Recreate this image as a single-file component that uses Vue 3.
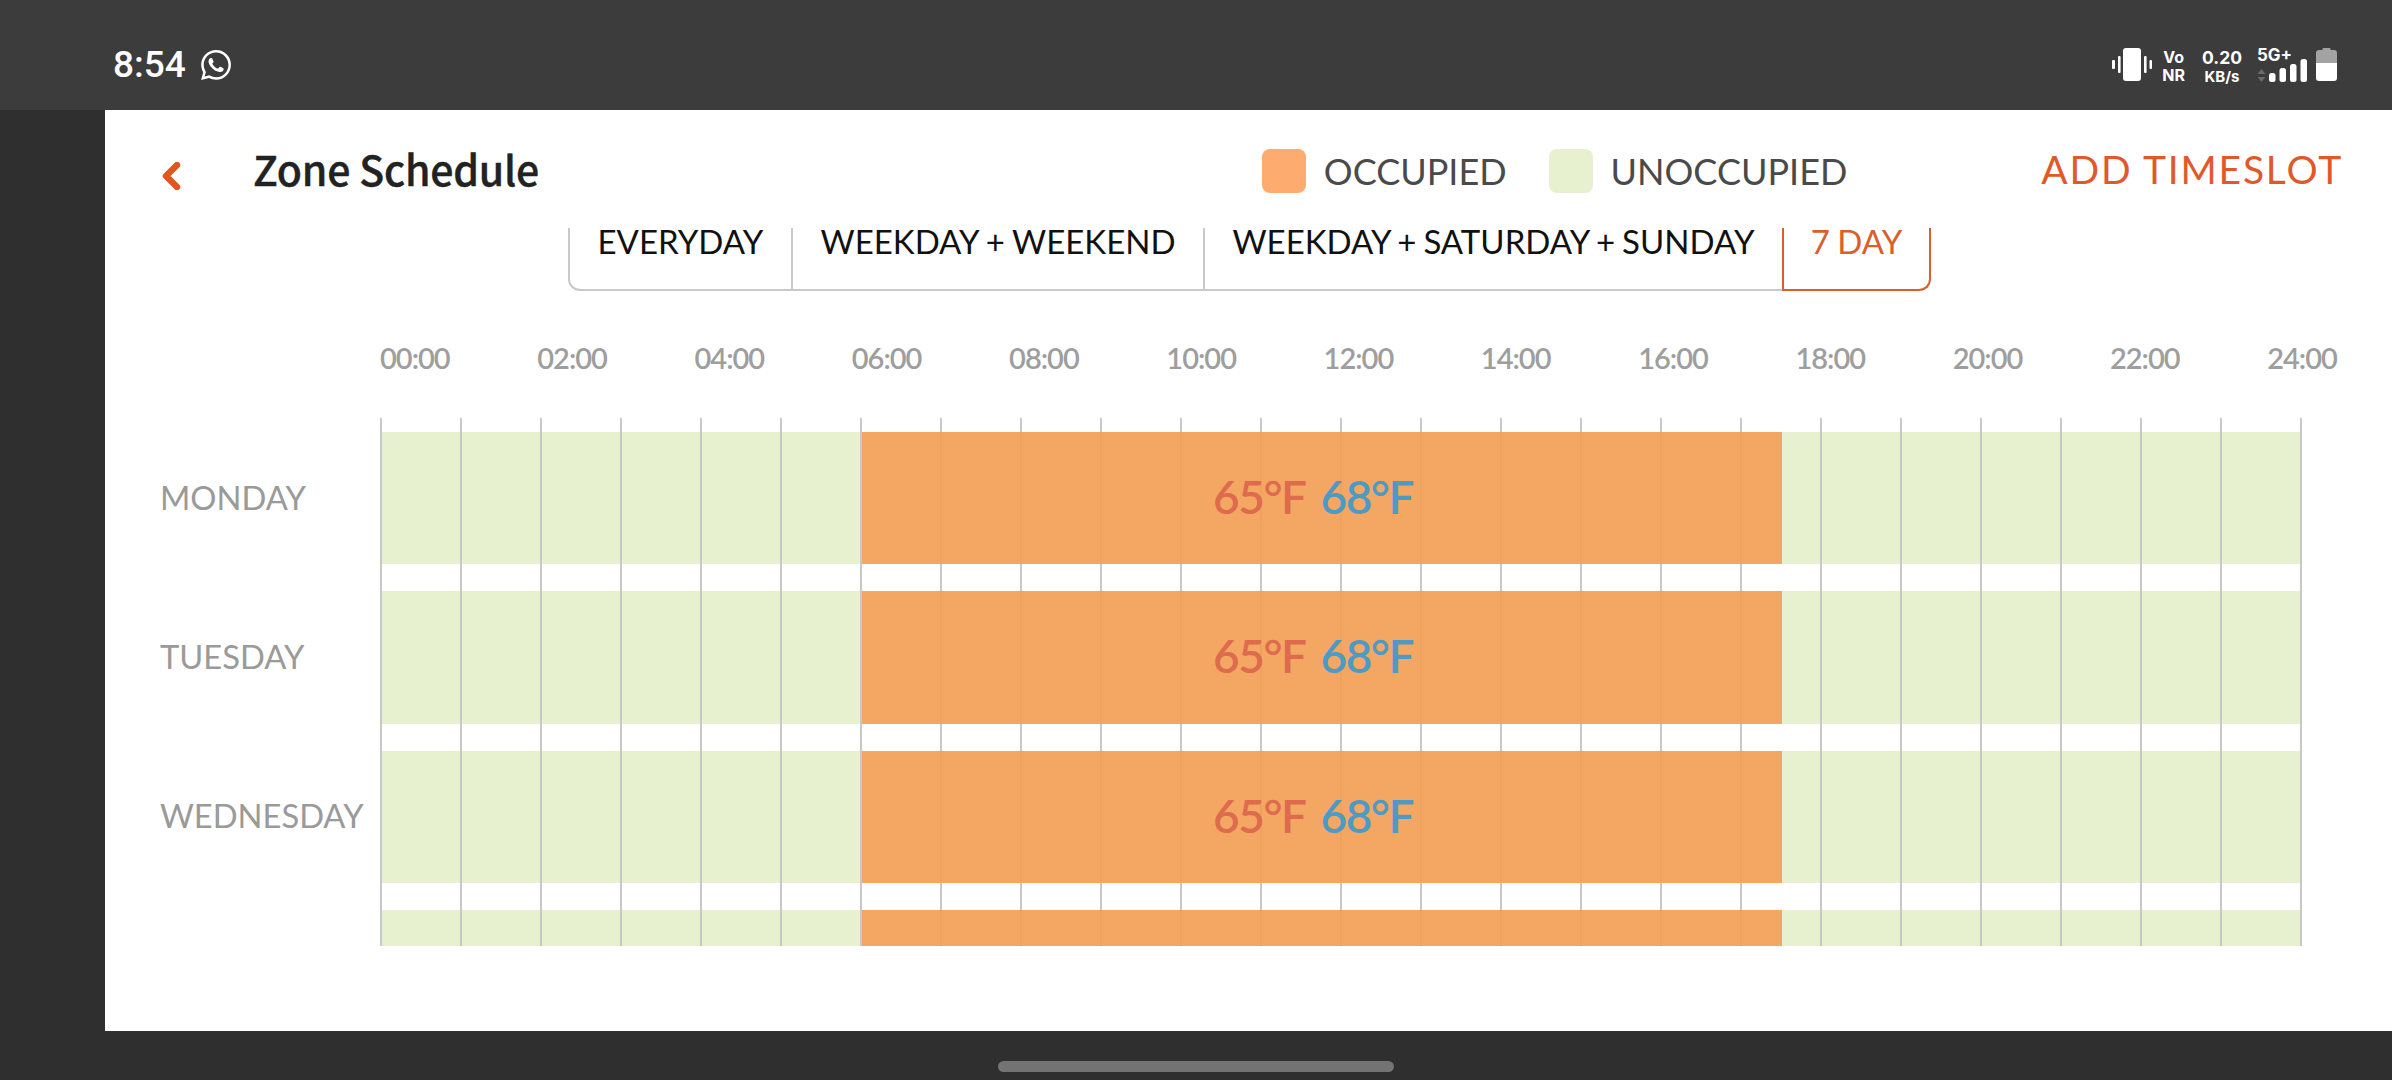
<template>
  <div class="page">
    <div class="status-bar">
      <div class="status-left">
        <span class="clock">8:54</span>
        <svg class="wa" viewBox="0 0 24 24" width="30" height="30"><path fill="#fff" d="M17.472 14.382c-.297-.149-1.758-.867-2.03-.967-.273-.099-.471-.148-.67.15-.197.297-.767.966-.94 1.164-.173.199-.347.223-.644.075-.297-.15-1.255-.463-2.39-1.475-.883-.788-1.48-1.761-1.653-2.059-.173-.297-.018-.458.13-.606.134-.133.298-.347.446-.52.149-.174.198-.298.298-.497.099-.198.05-.371-.025-.52-.075-.149-.669-1.612-.916-2.207-.242-.579-.487-.5-.669-.51-.173-.008-.371-.01-.57-.01-.198 0-.52.074-.792.372-.272.297-1.04 1.016-1.04 2.479 0 1.462 1.065 2.875 1.213 3.074.149.198 2.096 3.2 5.077 4.487.709.306 1.262.489 1.694.625.712.227 1.36.195 1.871.118.571-.085 1.758-.719 2.006-1.413.248-.694.248-1.289.173-1.413-.074-.124-.272-.198-.57-.347m-5.421 7.403h-.004a9.87 9.87 0 01-5.031-1.378l-.361-.214-3.741.982.998-3.648-.235-.374a9.86 9.86 0 01-1.51-5.26c.001-5.45 4.436-9.884 9.888-9.884 2.64 0 5.122 1.03 6.988 2.898a9.825 9.825 0 012.893 6.994c-.003 5.45-4.437 9.884-9.885 9.884m8.413-18.297A11.815 11.815 0 0012.05 0C5.495 0 .16 5.335.157 11.892c0 2.096.547 4.142 1.588 5.945L.057 24l6.305-1.654a11.882 11.882 0 005.683 1.448h.005c6.554 0 11.89-5.335 11.893-11.893a11.821 11.821 0 00-3.48-8.413Z"/></svg>
      </div>
      <div class="status-right">
        <svg class="vibrate" viewBox="0 0 40 34" width="40" height="34" fill="#fff">
          <rect x="11" y="0" width="18" height="33" rx="3"/>
          <rect x="0" y="12" width="3" height="9" rx="1"/>
          <rect x="6" y="8" width="2.6" height="17" rx="1"/>
          <rect x="32" y="8" width="2.6" height="17" rx="1"/>
          <rect x="37.5" y="12" width="2.5" height="9" rx="1"/>
        </svg>
        <div class="stack vo"><span>Vo</span><span>NR</span></div>
        <div class="stack speed"><span class="big">0.20</span><span>KB/s</span></div>
        <div class="net">
          <span class="five-g">5G+</span>
          <svg viewBox="0 0 52 13" width="52" height="13">
            <path fill="#6b6b6b" d="M4.500 0 8.500 5H.5zM4.500 13 .5 8h8z"/>
            <g fill="#fff">
              <rect x="12" y="4" width="6.500" height="9" rx="2.500"/>
              <rect x="22.500" y="-1" width="6.500" height="14" rx="2.500"/>
              <rect x="33" y="-5" width="6.500" height="18" rx="2.500"/>
              <rect x="43.500" y="-10" width="6.500" height="23" rx="2.500"/>
            </g>
          </svg>
        </div>
        <svg class="battery" viewBox="0 0 21 33" width="21" height="33">
          <path fill="#a3a3a3" d="M0 15V5q0-3 3-3h3.500V1q0-1 1-1h6q1 0 1 1v1H18q3 0 3 3v10z"/>
          <path fill="#fff" d="M0 15h21v15q0 3-3 3H3q-3 0-3-3z"/>
        </svg>
      </div>
    </div>

    <div class="middle">
      <div class="side"></div>
      <main class="panel">
        <header class="head">
          <svg class="back" viewBox="0 0 20 28" width="20" height="28"><path d="M16 3 5 14l11 11" fill="none" stroke="#e0561f" stroke-width="6.500" stroke-linejoin="round" stroke-linecap="round"/></svg>
          <h1>Zone Schedule</h1>
          <div class="legend">
            <span class="swatch occ"></span><span class="legend-text">OCCUPIED</span>
            <span class="swatch unocc"></span><span class="legend-text">UNOCCUPIED</span>
          </div>
          <a href="#" class="add" @click.prevent>ADD TIMESLOT</a>
        </header>

        <div class="tabs">
          <div
            v-for="t in tabs"
            :key="t.label"
            class="tab"
            :class="[t.cls, { active: t.active }]"
          >{{ t.label }}</div>
        </div>

        <div class="times">
          <span v-for="h in hours" :key="h">{{ h }}</span>
        </div>

        <div class="schedule">
          <div v-for="d in days" :key="d.name" class="row">
            <div class="day">{{ d.name }}</div>
            <div class="track">
              <div class="seg early"></div>
              <div class="seg busy">
                <template v-if="d.temps">
                  <span class="heat">65°F</span>
                  <span class="cool">68°F</span>
                </template>
              </div>
              <div class="seg late"></div>
            </div>
          </div>
          <div class="lines">
            <i v-for="n in 25" :key="n"></i>
          </div>
        </div>
      </main>
    </div>

    <div class="bottom-bar"><div class="home-pill"></div></div>
  </div>
</template>

<script setup>
const tabs = [
  { label: 'EVERYDAY', cls: 't1' },
  { label: 'WEEKDAY + WEEKEND', cls: 't2' },
  { label: 'WEEKDAY + SATURDAY + SUNDAY', cls: 't3' },
  { label: '7 DAY', cls: 't4', active: true }
]

const hours = []
for (let h = 0; h <= 24; h += 2) {
  hours.push(String(h).padStart(2, '0') + ':00')
}

// the last row is scrolled almost out of view, only its bar still shows
const days = [
  { name: 'MONDAY', temps: true },
  { name: 'TUESDAY', temps: true },
  { name: 'WEDNESDAY', temps: true },
  { name: '', temps: false }
]
</script>

<style>
html, body {
  margin: 0;
  background: #2f2f2f;
}
</style>

<style scoped>
.page {
  width: 2392px;
  height: 1080px;
  display: flex;
  flex-direction: column;
  overflow: hidden;
  font-family: Lato, "Liberation Sans", sans-serif;
}

/* status bar */
.status-bar {
  height: 110px;
  flex: none;
  background: #3c3c3c;
  display: flex;
  justify-content: space-between;
  align-items: flex-start;
  padding: 48px 55px 0 113px;
  box-sizing: border-box;
  color: #fff;
}
.status-left {
  display: flex;
  align-items: center;
  gap: 15px;
  height: 34px;
}
.clock {
  font-family: Roboto, sans-serif;
  font-size: 37px;
  font-weight: 500;
  line-height: 34px;
}
.status-right {
  display: flex;
  align-items: flex-start;
}
.stack {
  display: flex;
  flex-direction: column;
  align-items: center;
  font-family: Inter, sans-serif;
  font-weight: 700;
  font-size: 15px;
  line-height: 18px;
}
.vo {
  margin-left: 10px;
  font-size: 16px;
}
.speed {
  margin-left: 17px;
}
.speed .big {
  font-size: 17.500px;
  line-height: 20px;
}
.net {
  margin-left: 15px;
  width: 52px;
  display: flex;
  flex-direction: column;
  gap: 6px;
}
.net svg {
  overflow: visible;
}
.five-g {
  font-family: Inter, sans-serif;
  font-weight: 700;
  font-size: 17px;
  line-height: 15px;
}
.battery {
  margin-left: 7px;
}

/* body */
.middle {
  flex: 1;
  display: flex;
  min-height: 0;
}
.side {
  width: 105px;
  flex: none;
  background: #2f2f2f;
}
.panel {
  flex: 1;
  background: #fff;
  display: flex;
  flex-direction: column;
}
.head {
  height: 118px;
  flex: none;
  display: flex;
  align-items: center;
  padding: 0 49px 0 56px;
  box-sizing: border-box;
}
.back {
  flex: none;
  margin-top: 13px;
}
h1 {
  margin: 0 0 2px 72px;
  font-family: "Noto Sans CJK SC", "Noto Sans", sans-serif;
  font-size: 41px;
  font-weight: 500;
  letter-spacing: -0.200px;
  -webkit-text-stroke: 0.400px #222;
  color: #222;
}
.legend {
  display: flex;
  align-items: center;
  margin-left: auto;
  margin-top: 3px;
}
.swatch {
  width: 44px;
  height: 44px;
  border-radius: 8px;
}
.swatch.occ {
  background: #fdab6f;
}
.swatch.unocc {
  background: #e7f0cf;
  margin-left: 42px;
}
.legend-text {
  font-size: 36px;
  color: #4a4a4a;
  margin-left: 18px;
}
.add {
  margin-left: 194px;
  font-size: 39px;
  letter-spacing: 1.800px;
  color: #e0592a;
  text-decoration: none;
  white-space: nowrap;
}

/* tabs */
.tabs {
  flex: none;
  display: flex;
  margin-left: 463px;
  height: 63px;
}
.tab {
  box-sizing: border-box;
  border-right: 2px solid #c9c9c9;
  border-bottom: 2px solid #c9c9c9;
  font-size: 33px;
  line-height: 27px;
  word-spacing: -1px;
  text-align: center;
  color: #111;
  white-space: nowrap;
}
.t1 {
  width: 225px;
  border-left: 2px solid #c9c9c9;
  border-bottom-left-radius: 12px;
}
.t2 {
  width: 412px;
}
.t3 {
  width: 577px;
  border-right: none;
  word-spacing: -1.500px;
}
.t4 {
  width: 149px;
}
.tab.active {
  border: 2px solid #d9602c;
  border-top: none;
  border-bottom-right-radius: 12px;
  border-bottom-left-radius: 0;
  color: #d9602c;
}

/* time axis */
.times {
  flex: none;
  display: flex;
  justify-content: space-between;
  margin: 49px 55px 0 275px;
  font-size: 29px;
  font-weight: 600;
  line-height: 36px;
  letter-spacing: -1px;
  color: #9e9e9e;
}

/* grid */
.schedule {
  position: relative;
  flex: none;
  margin-top: 42px;
  height: 528px;
  overflow: hidden;
  padding-top: 14px;
  box-sizing: border-box;
  display: flex;
  flex-direction: column;
  gap: 26.900px;
}
.row {
  flex: none;
  height: 132.400px;
  display: flex;
  align-items: stretch;
}
.day {
  width: 275px;
  flex: none;
  box-sizing: border-box;
  padding: 0 0 2px 55px;
  display: flex;
  align-items: center;
  font-size: 32.700px;
  color: #9a9a9a;
  white-space: nowrap;
}
.track {
  width: 1922px;
  flex: none;
  display: flex;
}
.seg {
  background: #e7f0cf;
}
.early {
  width: 482px;
}
.late {
  width: 520px;
}
.busy {
  width: 920px;
  position: relative;
  z-index: 2;
  background: rgba(243, 157, 82, 0.9);
  display: flex;
  align-items: center;
  justify-content: center;
  gap: 15px;
  padding: 0 18px 3px 0;
  box-sizing: border-box;
  font-size: 46px;
  font-weight: 600;
  letter-spacing: -1.500px;
}
.heat {
  color: #de6b4e;
}
.cool {
  color: #4f9ac3;
}
.lines {
  position: absolute;
  left: 275px;
  top: 0;
  bottom: 0;
  width: 1922px;
  z-index: 1;
  display: flex;
  justify-content: space-between;
}
.lines i {
  width: 2px;
  background: #c8c8c8;
}

/* bottom */
.bottom-bar {
  height: 49px;
  flex: none;
  background: #2f2f2f;
  display: flex;
  justify-content: center;
  align-items: center;
}
.home-pill {
  width: 396px;
  height: 11px;
  border-radius: 6px;
  background: #737373;
  margin-top: 21px;
}
</style>
